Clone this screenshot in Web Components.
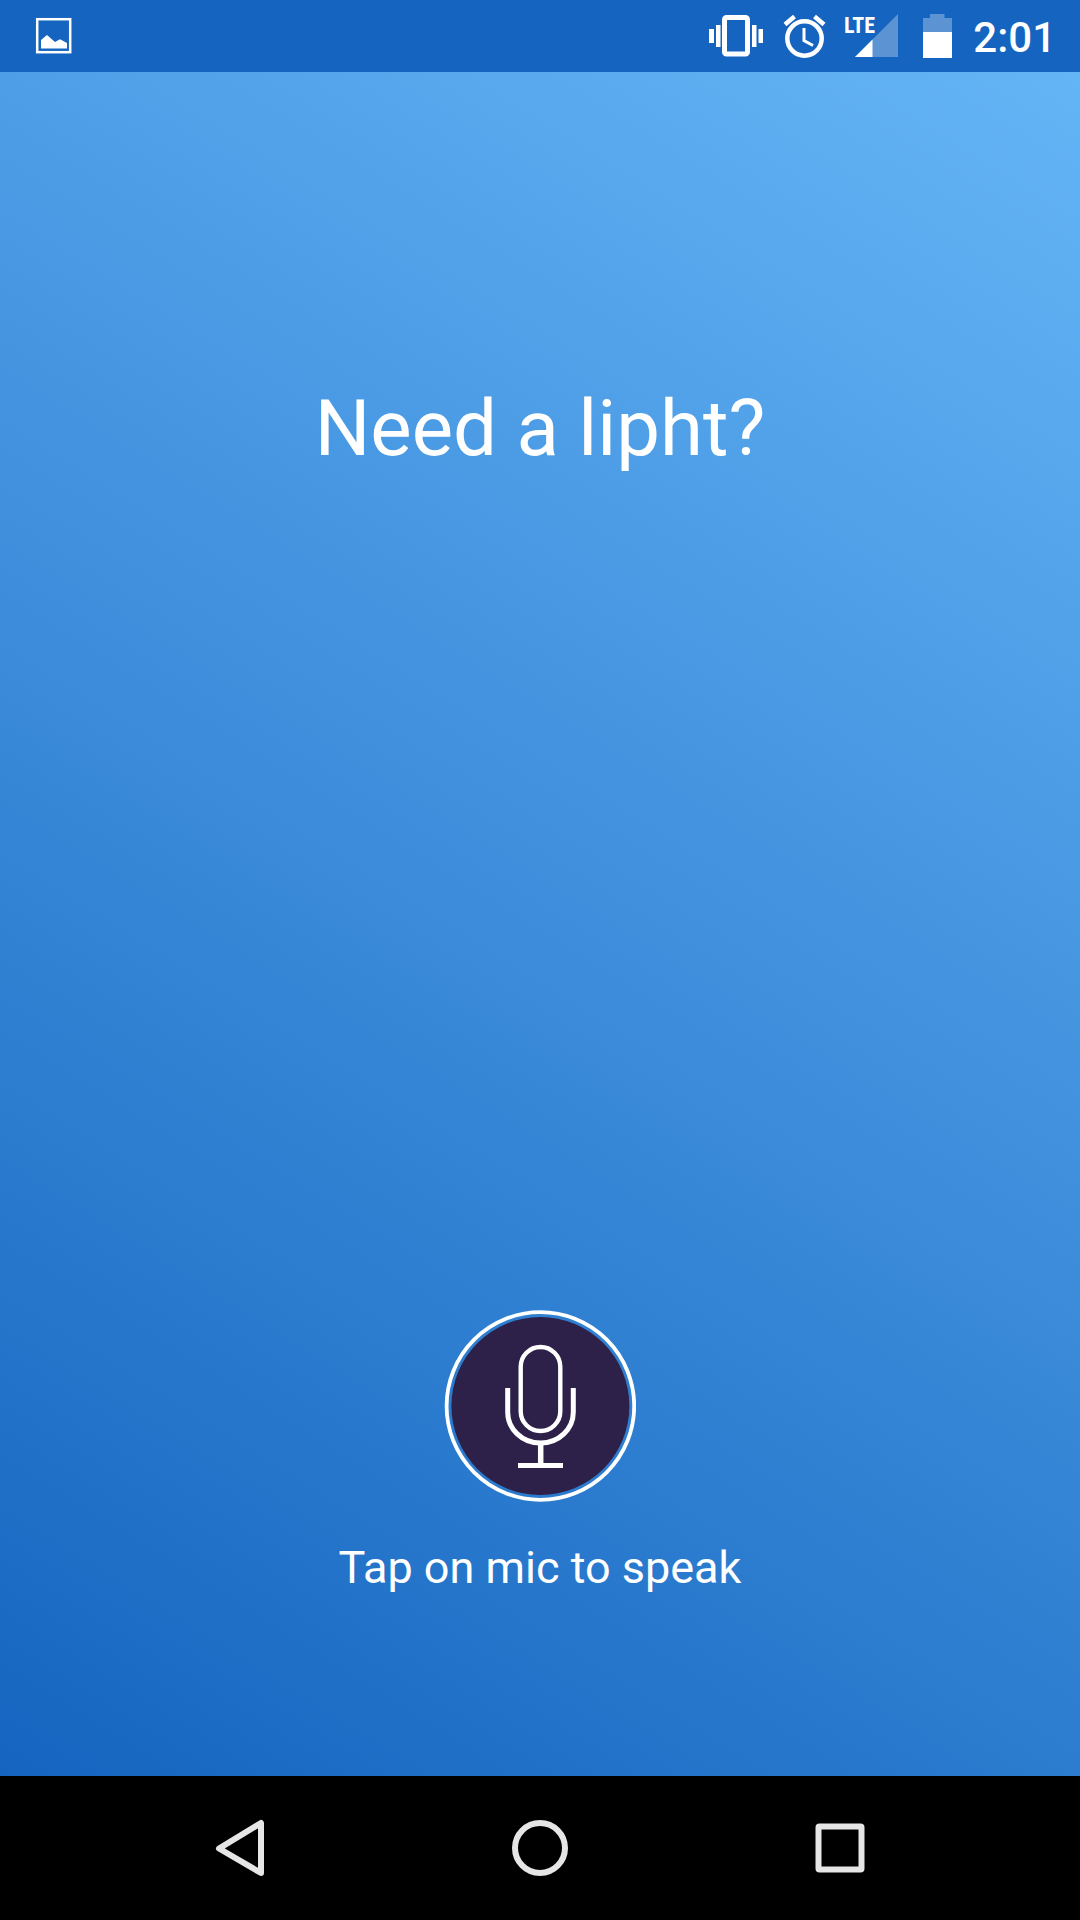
<!DOCTYPE html>
<html lang="en">
<head>
<meta charset="utf-8">
<meta name="viewport" content="width=device-width, initial-scale=1">
<title>Lipht</title>
<style>
    body {
        margin: 0;
        font-family: Roboto, "Liberation Sans", sans-serif;
        background: #000;
    }
</style>
</head>
<body>
<lipht-app></lipht-app>

<script>
class StatusBar extends HTMLElement {
    constructor() {
        super();
        this.myRoot = this.attachShadow({ mode: "open" });
        this.#Render();
    }

    #Render() {
        this.myRoot.innerHTML = `
        <style>
            :host {
                display: flex;
                align-items: center;
                justify-content: space-between;
                height: 72px;
                padding: 0 24px 0 32px;
                background: #1565c0;
                color: white;
            }

            svg {
                display: block;
            }

            .icons {
                display: flex;
                align-items: center;
            }

            .lte {
                font: 700 22px/22px "Roboto Condensed", "Liberation Sans Narrow", Roboto, sans-serif;
            }

            time {
                margin-left: 15px;
                padding-top: 4px;
                font-size: 42px;
                line-height: 48px;
                font-weight: 500;
            }
        </style>
        <svg width="44" height="72" viewBox="32 0 44 72" role="img" aria-label="Screenshot saved">
            <rect x="37.2" y="19.2" width="33" height="33" fill="none" stroke="white" stroke-width="2.5"/>
            <path d="M41 48.500V40L47 35L55 42L60 39.300L67 43V48.500Z" fill="white"/>
        </svg>
        <section class="icons">
            <svg width="64" height="72" viewBox="704 0 64 72" role="img" aria-label="Vibrate">
                <rect x="724.5" y="17.500" width="23" height="36.500" rx="2" fill="none" stroke="white" stroke-width="5"/>
                <path d="M709 29h5v14h-5zM716 25h4.500v22h-4.500zM752 25h4.500v22h-4.500zM758.500 29h4.500v14h-4.500z" fill="white"/>
            </svg>
            <svg width="72" height="72" viewBox="768 0 72 72" role="img" aria-label="Alarm">
                <g fill="none" stroke="white">
                    <circle cx="804.500" cy="38.500" r="17.200" stroke-width="4.500"/>
                    <path d="M804 28V40.500L813 45.500" stroke-width="3"/>
                    <path d="M785 24.500L794.500 16.500M814.500 16.500L824 24.500" stroke-width="4.500"/>
                </g>
            </svg>
            <svg width="72" height="72" viewBox="840 0 72 72" role="img" aria-label="Mobile signal">
                <path d="M855 57L898 14V57Z" fill="white" fill-opacity="0.3"/>
                <path d="M855 57L872.500 39.500V57Z" fill="white"/>
                <text class="lte" x="844" y="33" fill="white">LTE</text>
            </svg>
            <svg width="46" height="72" viewBox="912 0 46 72" role="img" aria-label="Battery">
                <path d="M923 32V18H930V14H944.500V18H952V32Z" fill="white" fill-opacity="0.3"/>
                <path d="M923 32H952V58H923Z" fill="white"/>
            </svg>
            <time datetime="02:01">2:01</time>
        </section>
    `;
    }
}

class MicButton extends HTMLElement {
    constructor() {
        super();
        this.myRoot = this.attachShadow({ mode: "open" });
        this.#Render();
    }

    #Render() {
        this.myRoot.innerHTML = `
        <style>
            :host {
                display: flex;
                flex-direction: column;
                align-items: center;
                gap: 40px;
            }

            button {
                padding: 0;
                border: 0;
                border-radius: 50%;
                background: none;
                cursor: pointer;
            }

            svg {
                display: block;
            }

            label {
                font-size: 45px;
                line-height: 52px;
                text-align: center;
            }
        </style>
        <button id="mic" type="button">
            <svg width="192" height="192" viewBox="0 0 192 192" aria-hidden="true">
                <circle cx="96.400" cy="96" r="93.800" fill="none" stroke="white" stroke-width="3.800"/>
                <circle cx="96.400" cy="96" r="89" fill="#2d2149"/>
                <g fill="none" stroke="white">
                    <rect x="76.700" y="37" width="39.600" height="84" rx="19.800" stroke-width="4.400"/>
                    <path d="M63.700 78V102C63.700 119 78 133 96.500 133S129.300 119 129.300 102V78" stroke-width="5"/>
                    <path d="M96.700 133V156" stroke-width="5.500"/>
                    <path d="M74 155.500H119" stroke-width="5"/>
                </g>
            </svg>
        </button>
        <label for="mic"><slot></slot></label>
    `;
    }
}

class NavBar extends HTMLElement {
    constructor() {
        super();
        this.myRoot = this.attachShadow({ mode: "open" });
        this.#Render();
    }

    #Render() {
        this.myRoot.innerHTML = `
        <style>
            :host {
                display: block;
                background: black;
            }

            nav {
                display: flex;
                height: 144px;
                padding: 0 90px;
            }

            button {
                flex: 1;
                display: flex;
                align-items: center;
                justify-content: center;
                padding: 0;
                border: 0;
                background: none;
                cursor: pointer;
            }

            svg {
                fill: none;
                stroke: #e6e6e6;
                stroke-width: 6;
                stroke-linejoin: round;
            }
        </style>
        <nav>
            <button type="button" aria-label="Back">
                <svg width="60" height="60" viewBox="0 0 60 60"><path d="M9 30.500L51 5V55Z"/></svg>
            </button>
            <button type="button" aria-label="Home">
                <svg width="60" height="60" viewBox="0 0 60 60"><circle cx="30" cy="30" r="25"/></svg>
            </button>
            <button type="button" aria-label="Recent apps">
                <svg width="60" height="60" viewBox="0 0 60 60"><rect x="8.500" y="8.500" width="43" height="43" rx="1"/></svg>
            </button>
        </nav>
    `;
    }
}

class LiphtApp extends HTMLElement {
    constructor() {
        super();
        this.myRoot = this.attachShadow({ mode: "open" });
        this.#Render();
    }

    #Render() {
        this.myRoot.innerHTML = `
        <style>
            :host {
                display: flex;
                flex-direction: column;
                min-height: 100vh;
            }

            main {
                flex: 1;
                display: flex;
                flex-direction: column;
                justify-content: space-between;
                align-items: center;
                padding: 311px 32px 182px;
                background: linear-gradient(32deg, #1565c0, #64b5f6);
                color: white;
            }

            h1 {
                margin: 0;
                font-size: 78px;
                line-height: 92px;
                font-weight: 400;
                text-align: center;
            }
        </style>
        <status-bar></status-bar>
        <main>
            <h1>Need a lipht?</h1>
            <mic-button>Tap on mic to speak</mic-button>
        </main>
        <nav-bar></nav-bar>
    `;
    }
}

window.customElements.define("status-bar", StatusBar);
window.customElements.define("mic-button", MicButton);
window.customElements.define("nav-bar", NavBar);
window.customElements.define("lipht-app", LiphtApp);
</script>
</body>
</html>
